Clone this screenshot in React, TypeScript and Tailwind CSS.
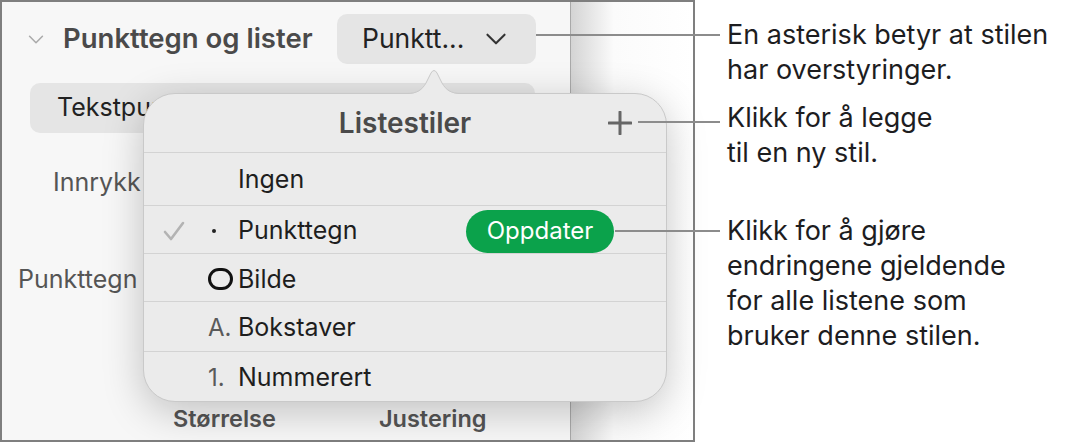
import React from "react";

const Chevron = ({ className }: { className?: string }) => (
  <svg viewBox="0 0 24 14" className={className} fill="none" stroke="currentColor" strokeWidth="2.4" strokeLinecap="round" strokeLinejoin="round">
    <path d="M2 2 L12 12 L22 2" />
  </svg>
);

const Check = () => (
  <svg viewBox="0 0 22 20" className="w-[22px] h-[20px] text-[#b3b3b3]" fill="none" stroke="currentColor" strokeWidth="2.6" strokeLinecap="round" strokeLinejoin="round">
    <path d="M2 11 L8 18 L20 2" />
  </svg>
);

const Plus = () => (
  <svg viewBox="0 0 24 24" className="w-[24px] h-[24px] text-[#666666]" fill="none" stroke="currentColor" strokeWidth="3" strokeLinecap="round">
    <path d="M12 1 V23 M1 12 H23" />
  </svg>
);

const Arrow = () => (
  <svg viewBox="0 0 54 26" className="w-[54px] h-[26px]">
    <path d="M0 26 C10 26 15 22 19 15 L24 5 Q27 0 30 5 L35 15 C39 22 44 26 54 26 Z" fill="#ebebeb" />
    <path d="M0 25.5 C10 25.5 15 22 19 15 L24 5 Q27 0 30 5 L35 15 C39 22 44 25.5 54 25.5" fill="none" stroke="#c9c9c9" strokeWidth="1" />
  </svg>
);

const rows = [
  { label: "Ingen", h: "h-[53px]" },
  { label: "Punkttegn", h: "h-[49px]", checked: true },
  { label: "Bilde", h: "h-[48px]", icon: "circle" },
  { label: "Bokstaver", h: "h-[50px]", icon: "A." },
  { label: "Nummerert", h: "h-[50px]", icon: "1." },
];

const ListStyles = () => (
  <div className="absolute left-[143px] top-[93px] w-[524px] h-[309px] rounded-[32px] bg-[#ebebeb] border border-[#c9c9c9] shadow-[0_10px_40px_rgba(0,0,0,0.22)] flex flex-col">
    <div className="h-[58px] relative flex items-center justify-center">
      <span className="text-[28px] font-semibold text-[#4a4a4a]">Listestiler</span>
      <div className="absolute right-[34px] top-[17px]">
        <Plus />
      </div>
    </div>
    {rows.map((r) => (
      <div key={r.label} className={`${r.h} border-t border-[#d3d3d3] flex items-center pt-[3px]`}>
        <div className="w-[64px] pl-[19px] flex items-center">{r.checked && <Check />}</div>
        <div className="w-[30px] flex items-center">
          {r.checked && <span className="ml-[4px] w-[4px] h-[4px] rounded-full bg-[#222]" />}
          {r.icon === "circle" && <span className="w-[25px] h-[22px] rounded-full border-[3.5px] border-[#111]" />}
          {(r.icon === "A." || r.icon === "1.") && <span className="text-[24px] text-[#5a5a5a]">{r.icon}</span>}
        </div>
        <span className="text-[25px] text-[#1e1e1e]">{r.label}</span>
        {r.checked && (
          <span className="ml-auto mr-[52px] h-[43px] w-[148px] rounded-full bg-[#0ba24b] text-white text-[24px] flex items-center justify-center">
            Oppdater
          </span>
        )}
      </div>
    ))}
  </div>
);

export default function App() {
  return (
    <div className="relative w-[1069px] h-[442px] bg-white flex font-['Inter','Noto_Sans',sans-serif] overflow-hidden">
      <div className="w-[695px] h-[442px] border-2 border-[#7f7f7f] flex">
        <div className="w-[569px] bg-[#f7f7f7] border-r border-[#a9a9a9] flex flex-col">
          <div className="mt-[12px] h-[50px] flex items-center">
            <Chevron className="ml-[26px] w-[16px] h-[9px] text-[#aaaaaa]" />
            <span className="ml-[19px] text-[27.5px] font-semibold text-[#4a4a4a]">Punkttegn og lister</span>
            <div className="ml-auto mr-[34px] w-[199px] h-[50px] rounded-[10px] bg-[#e5e5e5] flex items-center pl-[25px] pr-[29px]">
              <span className="text-[26.5px] text-[#222]">Punktt...</span>
              <Chevron className="ml-auto w-[22px] h-[12px] text-[#333]" />
            </div>
          </div>
          <div className="mt-[19px] ml-[28px] mr-[35px] h-[50px] rounded-[10px] bg-[#e5e5e5] flex items-center pl-[27px]">
            <span className="text-[25px] text-[#222]">Tekstpunkt</span>
          </div>
          <div className="mt-[32px] h-[36px] flex items-center pl-[51px]">
            <span className="text-[25px] text-[#555]">Innrykk</span>
          </div>
          <div className="mt-[61px] h-[36px] flex items-center pl-[16px]">
            <span className="text-[25px] text-[#555]">Punkttegn</span>
          </div>
          <div className="mt-auto mb-[6px] h-[30px] flex items-center">
            <span className="ml-[171px] text-[23.5px] font-semibold text-[#555]">Størrelse</span>
            <span className="ml-[103px] text-[23.5px] font-semibold text-[#555]">Justering</span>
          </div>
        </div>
        <div className="flex-1 bg-linear-to-r from-[#d4d4d4] via-[#fbfbfb] via-35% to-white" />
      </div>

      <ListStyles />
      <div className="absolute left-[407px] top-[68px]">
        <Arrow />
      </div>

      <div className="absolute left-[536px] top-[34px] w-[184px] h-[2px] bg-[#8c8c8c]" />
      <div className="absolute left-[638px] top-[121px] w-[82px] h-[2px] bg-[#8c8c8c]" />
      <div className="absolute left-[615px] top-[230px] w-[105px] h-[2px] bg-[#8c8c8c]" />

      <div className="flex flex-col pl-[32px] text-[27px] leading-[35px] text-[#1d1d1f]">
        <p className="mt-[17px]">
          En asterisk betyr at stilen
          <br />
          har overstyringer.
        </p>
        <p className="mt-[13px]">
          Klikk for å legge
          <br />
          til en ny stil.
        </p>
        <p className="mt-[43px]">
          Klikk for å gjøre
          <br />
          endringene gjeldende
          <br />
          for alle listene som
          <br />
          bruker denne stilen.
        </p>
      </div>
    </div>
  );
}
